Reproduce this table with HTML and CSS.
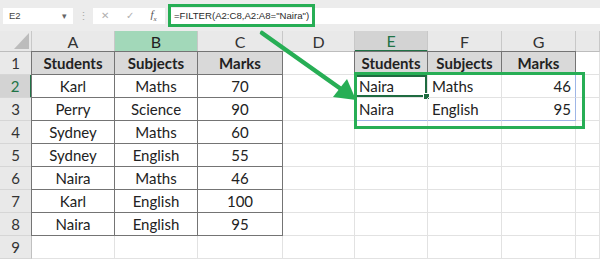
FILE: index.html
```
<!DOCTYPE html>
<html lang="en">
<head>
    <meta charset="UTF-8">
    <title>FILTER example</title>
    <link rel="stylesheet" href="styles.css">
</head>
<body>
    <div class="sheet">
        <div class="toolbar">
            <div class="namebox"><span>E2</span><span class="drop">&#9662;</span></div>
            <div class="dots">&#8942;</div>
            <div class="btnbox">
                <span class="tb-x">&#10005;</span>
                <span class="tb-ok">&#10003;</span>
                <span class="tb-fx">f<sub>x</sub></span>
            </div>
            <div class="formula-bar">
                <span class="formula">=FILTER(A2:C8,A2:A8="Naira")</span>
            </div>
        </div>

        <div class="grid">
            <!-- column headers -->
            <div class="corner"></div>
            <div class="ch">A</div>
            <div class="ch ch-green">B</div>
            <div class="ch">C</div>
            <div class="ch">D</div>
            <div class="ch ch-active">E</div>
            <div class="ch">F</div>
            <div class="ch">G</div>
            <div class="ch"></div>

            <!-- row 1 -->
            <div class="rh">1</div>
            <div class="c ctr hd bd bt bl">Students</div>
            <div class="c ctr hd bd bt">Subjects</div>
            <div class="c ctr hd bd bt">Marks</div>
            <div class="c"></div>
            <div class="c hd ctr bd bt bl">Students</div>
            <div class="c hd ctr bd bt">Subjects</div>
            <div class="c hd ctr bd bt">Marks</div>
            <div class="c"></div>

            <!-- row 2 -->
            <div class="rh rh-active">2</div>
            <div class="c ctr bd bl">Karl</div>
            <div class="c ctr bd">Maths</div>
            <div class="c ctr bd">70</div>
            <div class="c"></div>
            <div class="c active">Naira<span class="handle"></span></div>
            <div class="c">Maths</div>
            <div class="c r spill-r">46</div>
            <div class="c"></div>

            <!-- row 3 -->
            <div class="rh">3</div>
            <div class="c ctr bd bl">Perry</div>
            <div class="c ctr bd">Science</div>
            <div class="c ctr bd">90</div>
            <div class="c"></div>
            <div class="c spill-b">Naira</div>
            <div class="c spill-b">English</div>
            <div class="c r spill-r spill-b">95</div>
            <div class="c"></div>

            <!-- row 4 -->
            <div class="rh">4</div>
            <div class="c ctr bd bl">Sydney</div>
            <div class="c ctr bd">Maths</div>
            <div class="c ctr bd">60</div>
            <div class="c"></div><div class="c"></div><div class="c"></div><div class="c"></div><div class="c"></div>

            <!-- row 5 -->
            <div class="rh">5</div>
            <div class="c ctr bd bl">Sydney</div>
            <div class="c ctr bd">English</div>
            <div class="c ctr bd">55</div>
            <div class="c"></div><div class="c"></div><div class="c"></div><div class="c"></div><div class="c"></div>

            <!-- row 6 -->
            <div class="rh">6</div>
            <div class="c ctr bd bl">Naira</div>
            <div class="c ctr bd">Maths</div>
            <div class="c ctr bd">46</div>
            <div class="c"></div><div class="c"></div><div class="c"></div><div class="c"></div><div class="c"></div>

            <!-- row 7 -->
            <div class="rh">7</div>
            <div class="c ctr bd bl">Karl</div>
            <div class="c ctr bd">English</div>
            <div class="c ctr bd">100</div>
            <div class="c"></div><div class="c"></div><div class="c"></div><div class="c"></div><div class="c"></div>

            <!-- row 8 -->
            <div class="rh">8</div>
            <div class="c ctr bd bl">Naira</div>
            <div class="c ctr bd">English</div>
            <div class="c ctr bd">95</div>
            <div class="c"></div><div class="c"></div><div class="c"></div><div class="c"></div><div class="c"></div>

            <!-- row 9 -->
            <div class="rh">9</div>
            <div class="c"></div><div class="c"></div><div class="c"></div><div class="c"></div>
            <div class="c"></div><div class="c"></div><div class="c"></div><div class="c"></div>
        </div>

        <!-- annotation overlays -->
        <div class="result-box"></div>
        <svg class="arrow" width="600" height="260" viewBox="0 0 600 260">
            <line x1="262" y1="33" x2="341" y2="89" stroke="#27ae55" stroke-width="4.5" stroke-linecap="round"/>
            <polygon points="356,100 333,97 347,79" fill="#27ae55"/>
        </svg>
    </div>
</body>
</html>
```

FILE: styles.css
```
body {
    margin: 0;
    background: #fff;
    font-family: Lato, "Open Sans", sans-serif;
    color: #222;
}
.sheet {
    position: relative;
    width: 600px;
    height: 260px;
    overflow: hidden;
}
.toolbar {
    height: 31px;
    background-color: #ececec;
    display: flex;
    align-items: center;
    box-sizing: border-box;
    padding-left: 3px;
}
.namebox {
    width: 70px;
    height: 16px;
    background: #fff;
    box-sizing: border-box;
    display: flex;
    align-items: center;
    justify-content: space-between;
    padding: 0 6px;
    font-family: "Liberation Sans", sans-serif;
    font-size: 9.5px;
    color: #444;
}
.namebox .drop {
    font-size: 9px;
    color: #666;
}
.dots {
    width: 20px;
    text-align: center;
    color: #aaa;
    font-size: 11px;
}
.btnbox {
    width: 72px;
    height: 16px;
    background: #fff;
    display: flex;
    align-items: center;
    justify-content: space-around;
    font-family: "Liberation Sans", sans-serif;
    font-size: 10px;
    color: #b0b0b0;
}
.tb-fx {
    font-family: "Liberation Serif", serif;
    font-style: italic;
    color: #555;
    font-size: 11px;
}
.tb-fx sub {
    font-size: 7px;
}
.formula-bar {
    flex: 1;
    height: 16px;
    margin-left: 3px;
    background: #fff;
    display: flex;
    align-items: center;
}
.formula {
    height: 23px;
    box-sizing: border-box;
    border: 3px solid #27ae55;
    display: flex;
    align-items: center;
    padding: 0 3px 0 3px;
    font-family: "Liberation Sans", sans-serif;
    font-size: 9.6px;
    color: #2a2a2a;
    white-space: nowrap;
}
.grid {
    display: grid;
    grid-template-columns: 32px 83px 83px 85px 72px 73px 74px 74px 1fr;
    grid-template-rows: 21px repeat(9, 23px);
}
.corner {
    background: #e9e9e9;
    border-right: 1px solid #c8c8c8;
    border-bottom: 1px solid #bdbdbd;
    position: relative;
}
.corner::after {
    content: '';
    position: absolute;
    right: 2px;
    bottom: 2px;
    border-left: 15px solid transparent;
    border-bottom: 16px solid #bcbcbc;
}
.ch {
    background: #e9e9e9;
    border-right: 1px solid #c8c8c8;
    border-bottom: 1px solid #bdbdbd;
    display: flex;
    align-items: center;
    justify-content: center;
    font-size: 16px;
    color: #333;
}
.ch-green {
    background: #a2d8b9;
    color: #222;
}
.ch-active {
    background: #d3d3d3;
    color: #217346;
    border-bottom: 2px solid #217346;
}
.rh {
    background: #e9e9e9;
    border-right: 1px solid #c0c0c0;
    border-bottom: 1px solid #d6d6d6;
    display: flex;
    align-items: center;
    justify-content: center;
    font-size: 15px;
    color: #333;
}
.rh-active {
    background: #d3d3d3;
    color: #217346;
    border-right: 2px solid #217346;
}
.c {
    border-right: 1px solid #e2e2e2;
    border-bottom: 1px solid #e2e2e2;
    display: flex;
    align-items: center;
    padding: 0 4px;
    font-size: 15px;
    white-space: nowrap;
    position: relative;
}
.ctr {
    justify-content: center;
}
.r {
    justify-content: flex-end;
}
.hd {
    background: #d9d9d9;
    font-weight: bold;
}
.bd {
    border-right-color: #747474;
    border-bottom-color: #747474;
}
.bl {
    box-shadow: -1px 0 0 #747474;
}
.bt {
    box-shadow: 0 -1px 0 #747474;
}
.bt.bl {
    box-shadow: -1px 0 0 #747474, 0 -1px 0 #747474, -1px -1px 0 #747474;
}
.spill-r {
    border-right-color: #9fb6e6;
}
.spill-b {
    border-bottom-color: #9fb6e6;
}
.active {
    box-shadow: inset 0 0 0 2px #1e6b40;
}
.handle {
    position: absolute;
    right: -3px;
    bottom: -3px;
    width: 5px;
    height: 5px;
    background: #1e6b40;
    border: 1px solid #fff;
}
.result-box {
    position: absolute;
    left: 354px;
    top: 72px;
    width: 231px;
    height: 57px;
    box-sizing: border-box;
    border: 3px solid #27ae55;
    pointer-events: none;
}
.arrow {
    position: absolute;
    left: 0;
    top: 0;
    pointer-events: none;
}
```
